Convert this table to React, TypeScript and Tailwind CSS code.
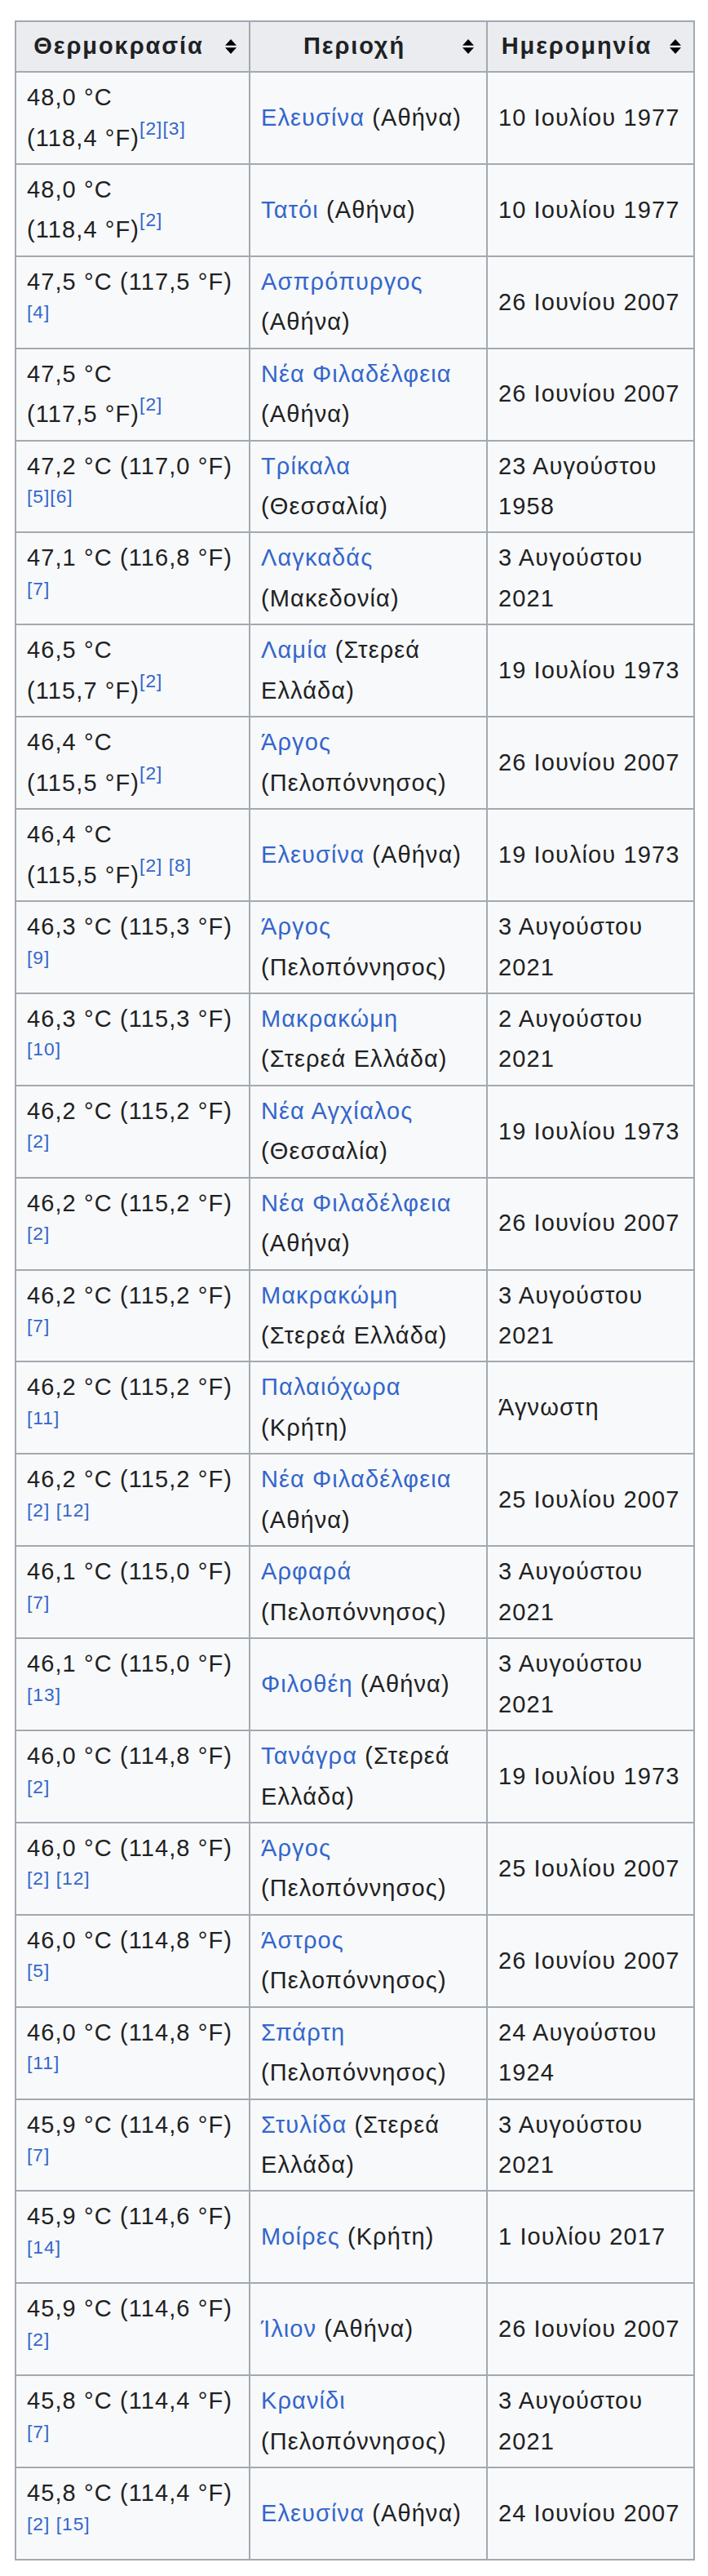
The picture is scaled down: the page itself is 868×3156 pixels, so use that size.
import React from "react";

type Row = [string, string, string, string, string, string];

const rows: Row[] = [
  ["48,0 °C", "(118,4 °F)", "[2][3]", "Ελευσίνα", " (Αθήνα)", "10 Ιουλίου 1977"],
  ["48,0 °C", "(118,4 °F)", "[2]", "Τατόι", " (Αθήνα)", "10 Ιουλίου 1977"],
  ["47,5 °C (117,5 °F)", "", "[4]", "Ασπρόπυργος", "\n(Αθήνα)", "26 Ιουνίου 2007"],
  ["47,5 °C", "(117,5 °F)", "[2]", "Νέα Φιλαδέλφεια", "\n(Αθήνα)", "26 Ιουνίου 2007"],
  ["47,2 °C (117,0 °F)", "", "[5][6]", "Τρίκαλα", "\n(Θεσσαλία)", "23 Αυγούστου\n1958"],
  ["47,1 °C (116,8 °F)", "", "[7]", "Λαγκαδάς", "\n(Μακεδονία)", "3 Αυγούστου\n2021"],
  ["46,5 °C", "(115,7 °F)", "[2]", "Λαμία", " (Στερεά\nΕλλάδα)", "19 Ιουλίου 1973"],
  ["46,4 °C", "(115,5 °F)", "[2]", "Άργος", "\n(Πελοπόννησος)", "26 Ιουνίου 2007"],
  ["46,4 °C", "(115,5 °F)", "[2] [8]", "Ελευσίνα", " (Αθήνα)", "19 Ιουλίου 1973"],
  ["46,3 °C (115,3 °F)", "", "[9]", "Άργος", "\n(Πελοπόννησος)", "3 Αυγούστου\n2021"],
  ["46,3 °C (115,3 °F)", "", "[10]", "Μακρακώμη", "\n(Στερεά Ελλάδα)", "2 Αυγούστου\n2021"],
  ["46,2 °C (115,2 °F)", "", "[2]", "Νέα Αγχίαλος", "\n(Θεσσαλία)", "19 Ιουλίου 1973"],
  ["46,2 °C (115,2 °F)", "", "[2]", "Νέα Φιλαδέλφεια", "\n(Αθήνα)", "26 Ιουνίου 2007"],
  ["46,2 °C (115,2 °F)", "", "[7]", "Μακρακώμη", "\n(Στερεά Ελλάδα)", "3 Αυγούστου\n2021"],
  ["46,2 °C (115,2 °F)", "", "[11]", "Παλαιόχωρα", "\n(Κρήτη)", "Άγνωστη"],
  ["46,2 °C (115,2 °F)", "", "[2] [12]", "Νέα Φιλαδέλφεια", "\n(Αθήνα)", "25 Ιουλίου 2007"],
  ["46,1 °C (115,0 °F)", "", "[7]", "Αρφαρά", "\n(Πελοπόννησος)", "3 Αυγούστου\n2021"],
  ["46,1 °C (115,0 °F)", "", "[13]", "Φιλοθέη", " (Αθήνα)", "3 Αυγούστου\n2021"],
  ["46,0 °C (114,8 °F)", "", "[2]", "Τανάγρα", " (Στερεά\nΕλλάδα)", "19 Ιουλίου 1973"],
  ["46,0 °C (114,8 °F)", "", "[2] [12]", "Άργος", "\n(Πελοπόννησος)", "25 Ιουλίου 2007"],
  ["46,0 °C (114,8 °F)", "", "[5]", "Άστρος", "\n(Πελοπόννησος)", "26 Ιουνίου 2007"],
  ["46,0 °C (114,8 °F)", "", "[11]", "Σπάρτη", "\n(Πελοπόννησος)", "24 Αυγούστου\n1924"],
  ["45,9 °C (114,6 °F)", "", "[7]", "Στυλίδα", " (Στερεά\nΕλλάδα)", "3 Αυγούστου\n2021"],
  ["45,9 °C (114,6 °F)", "", "[14]", "Μοίρες", " (Κρήτη)", "1 Ιουλίου 2017"],
  ["45,9 °C (114,6 °F)", "", "[2]", "Ίλιον", " (Αθήνα)", "26 Ιουνίου 2007"],
  ["45,8 °C (114,4 °F)", "", "[7]", "Κρανίδι", "\n(Πελοπόννησος)", "3 Αυγούστου\n2021"],
  ["45,8 °C (114,4 °F)", "", "[2] [15]", "Ελευσίνα", " (Αθήνα)", "24 Ιουνίου 2007"],
];

function Lines({ text }: { text: string }) {
  const parts = text.split("\n");
  return (
    <>
      {parts.map((p, i) => (
        <React.Fragment key={i}>
          {i > 0 && <br />}
          {p}
        </React.Fragment>
      ))}
    </>
  );
}

function SortIcon() {
  return (
    <svg width="14" height="18" viewBox="0 0 14 18" className="ml-[18px] shrink-0" aria-hidden="true">
      <polygon points="7,0 14,7.8 0,7.8" fill="#000000" />
      <polygon points="0,10.2 14,10.2 7,18" fill="#000000" />
    </svg>
  );
}

function Header({ label, width, first }: { label: string; width: string; first?: boolean }) {
  return (
    <th
      className={`${width} ${first ? "border-l-2" : ""} border-t-2 border-r-2 border-b-2 border-[#a2a9b1] bg-[#eaecf0] pl-[13px] pr-[15px] py-[5.25px] font-bold align-middle tracking-[1.9px]`}
    >
      <div className="flex items-center">
        <span className="flex-1 text-center whitespace-nowrap">{label}</span>
        <SortIcon />
      </div>
    </th>
  );
}

export default function App() {
  return (
    <div className="min-h-[3156px] bg-white pl-[18px] pt-[25px] font-['Liberation_Sans',Arial,sans-serif] text-[29px] leading-[49.5px] tracking-[1.1px] text-[#202122]">
      <table className="w-[834px] table-fixed border-separate border-spacing-0">
        <thead>
          <tr>
            <Header label="Θερμοκρασία" width="w-[289px]" first />
            <Header label="Περιοχή" width="w-[291px]" />
            <Header label="Ημερομηνία" width="w-[254px]" />
          </tr>
        </thead>
        <tbody>
          {rows.map((r, i) => (
            <tr key={i}>
              <td className="border-l-2 border-r-2 border-b-2 border-[#a2a9b1] bg-[#f8f9fa] px-[13px] pt-[6px] pb-[5.9px] align-middle whitespace-nowrap">
                {r[0]}
                <br />
                {r[1]}
                <sup className="top-[-14px] text-[22.8px] tracking-[1px] text-[#3366cc]">{r[2]}</sup>
              </td>
              <td className="border-r-2 border-b-2 border-[#a2a9b1] bg-[#f8f9fa] px-[13px] pt-[6px] pb-[5.9px] align-middle whitespace-nowrap">
                <a className="text-[#3366cc]">{r[3]}</a>
                <Lines text={r[4]} />
              </td>
              <td className="border-r-2 border-b-2 border-[#a2a9b1] bg-[#f8f9fa] px-[13px] pt-[6px] pb-[5.9px] align-middle whitespace-nowrap">
                <Lines text={r[5]} />
              </td>
            </tr>
          ))}
        </tbody>
      </table>
    </div>
  );
}
